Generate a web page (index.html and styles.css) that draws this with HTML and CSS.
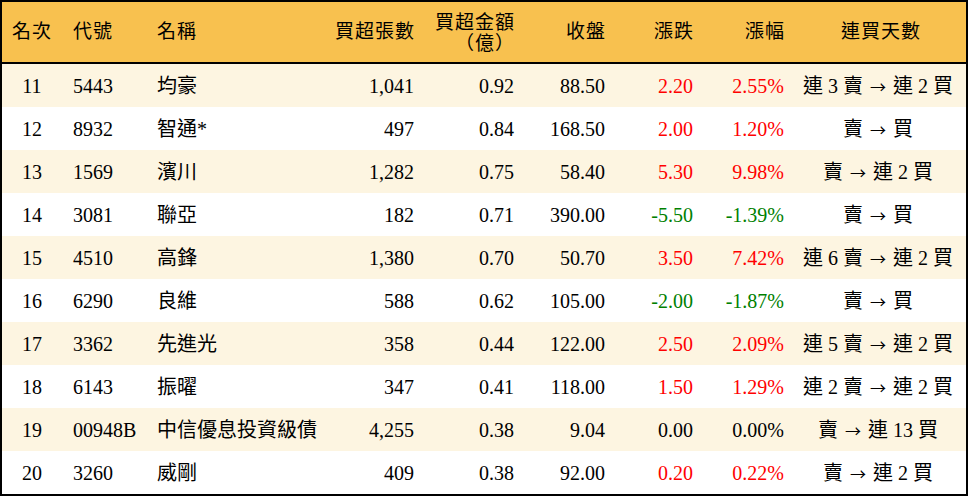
FILE: index.html
```html
<!DOCTYPE html>
<html lang="zh-Hant">
<head>
<meta charset="utf-8">
<link rel="stylesheet" href="styles.css">
</head>
<body>
<table class="rank-table">
  <colgroup>
    <col class="c-rank"><col class="c-code"><col class="c-name"><col class="c-vol"><col class="c-amt"><col class="c-close"><col class="c-chg"><col class="c-pct"><col class="c-days">
  </colgroup>
  <thead>
    <tr>
      <th class="center">名次</th>
      <th class="left">代號</th>
      <th class="left">名稱</th>
      <th class="right">買超張數</th>
      <th class="right two">買超金額<br>（億）</th>
      <th class="right">收盤</th>
      <th class="right">漲跌</th>
      <th class="right">漲幅</th>
      <th class="center">連買天數</th>
    </tr>
  </thead>
  <tbody>
    <tr class="alt"><td class="center">11</td><td class="left">5443</td><td class="left">均豪</td><td class="right">1,041</td><td class="right">0.92</td><td class="right">88.50</td><td class="right up">2.20</td><td class="right up">2.55%</td><td class="center days">連 3 賣 <span class="arrow">→</span> 連 2 買</td></tr>
    <tr><td class="center">12</td><td class="left">8932</td><td class="left">智通*</td><td class="right">497</td><td class="right">0.84</td><td class="right">168.50</td><td class="right up">2.00</td><td class="right up">1.20%</td><td class="center days">賣 <span class="arrow">→</span> 買</td></tr>
    <tr class="alt"><td class="center">13</td><td class="left">1569</td><td class="left">濱川</td><td class="right">1,282</td><td class="right">0.75</td><td class="right">58.40</td><td class="right up">5.30</td><td class="right up">9.98%</td><td class="center days">賣 <span class="arrow">→</span> 連 2 買</td></tr>
    <tr><td class="center">14</td><td class="left">3081</td><td class="left">聯亞</td><td class="right">182</td><td class="right">0.71</td><td class="right">390.00</td><td class="right down">-5.50</td><td class="right down">-1.39%</td><td class="center days">賣 <span class="arrow">→</span> 買</td></tr>
    <tr class="alt"><td class="center">15</td><td class="left">4510</td><td class="left">高鋒</td><td class="right">1,380</td><td class="right">0.70</td><td class="right">50.70</td><td class="right up">3.50</td><td class="right up">7.42%</td><td class="center days">連 6 賣 <span class="arrow">→</span> 連 2 買</td></tr>
    <tr><td class="center">16</td><td class="left">6290</td><td class="left">良維</td><td class="right">588</td><td class="right">0.62</td><td class="right">105.00</td><td class="right down">-2.00</td><td class="right down">-1.87%</td><td class="center days">賣 <span class="arrow">→</span> 買</td></tr>
    <tr class="alt"><td class="center">17</td><td class="left">3362</td><td class="left">先進光</td><td class="right">358</td><td class="right">0.44</td><td class="right">122.00</td><td class="right up">2.50</td><td class="right up">2.09%</td><td class="center days">連 5 賣 <span class="arrow">→</span> 連 2 買</td></tr>
    <tr><td class="center">18</td><td class="left">6143</td><td class="left">振曜</td><td class="right">347</td><td class="right">0.41</td><td class="right">118.00</td><td class="right up">1.50</td><td class="right up">1.29%</td><td class="center days">連 2 賣 <span class="arrow">→</span> 連 2 買</td></tr>
    <tr class="alt"><td class="center">19</td><td class="left">00948B</td><td class="left">中信優息投資級債</td><td class="right">4,255</td><td class="right">0.38</td><td class="right">9.04</td><td class="right">0.00</td><td class="right">0.00%</td><td class="center days">賣 <span class="arrow">→</span> 連 13 買</td></tr>
    <tr><td class="center">20</td><td class="left">3260</td><td class="left">威剛</td><td class="right">409</td><td class="right">0.38</td><td class="right">92.00</td><td class="right up">0.20</td><td class="right up">0.22%</td><td class="center days">賣 <span class="arrow">→</span> 連 2 買</td></tr>
  </tbody>
</table>
</body>
</html>
```

FILE: styles.css
```css
html, body {
  margin: 0;
  padding: 0;
  background: #ffffff;
}

.rank-table {
  width: 968px;
  table-layout: fixed;
  border-collapse: separate;
  border-spacing: 0;
  border: 2px solid #000;
  border-bottom-width: 3px;
  font-family: "Liberation Serif", "Noto Sans CJK TC", serif;
  font-size: 20px;
  color: #000;
}

.c-rank { width: 60px; }
.c-code { width: 84px; }
.c-name { width: 184px; }
.c-vol { width: 96px; }
.c-amt { width: 100px; }
.c-close { width: 91px; }
.c-chg { width: 88px; }
.c-pct { width: 91px; }
.c-days { width: 170px; }

th {
  background: #f8c14f;
  height: 59px;
  padding: 0;
  font-weight: normal;
  border-bottom: 2px solid #000;
  vertical-align: middle;
  line-height: 22px;
  font-size: 19px;
  letter-spacing: 1px;
}

th.two {
  line-height: 21px;
  padding-top: 1px;
}

td {
  height: 43px;
  padding: 0;
  vertical-align: middle;
  line-height: 24px;
  white-space: nowrap;
}

tbody tr.alt td {
  background: #fdf5e1;
}

.center { text-align: center; }
.left { text-align: left; padding-left: 11px; }
.right { text-align: right; padding-right: 12px; }

th.right { padding-right: 11px; }

td.up { color: #ff0000; }
td.down { color: #008000; }

td.days { padding-right: 6px; }

.arrow {
  font-family: "Noto Sans CJK TC", sans-serif;
  font-size: 16px;
  margin: 0 2px;
}
```
